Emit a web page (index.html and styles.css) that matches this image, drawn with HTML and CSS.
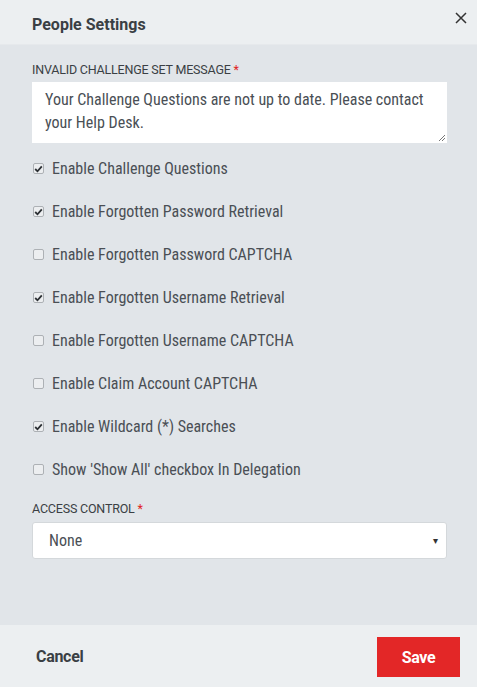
FILE: index.html
```html
<!DOCTYPE html>
<html>
<head>
<meta charset="utf-8">
<link rel="stylesheet" href="styles.css">
</head>
<body>
<div class="modal">
  <header class="head">
    <h1 class="title">People Settings</h1>
    <button class="close" aria-label="Close">
      <svg width="12" height="12" viewBox="0 0 12 12"><path d="M1 1 L11 11 M11 1 L1 11" stroke="#333" stroke-width="1.5" fill="none"/></svg>
    </button>
  </header>
  <main class="body">
    <div class="field first">
      <label class="lbl">INVALID CHALLENGE SET MESSAGE <span class="req">*</span></label>
      <div class="textarea">Your Challenge Questions are not up to date. Please contact your Help Desk.
        <svg class="grip" width="8" height="8" viewBox="0 0 8 8"><path d="M7 1 L1 7 M7 4 L4 7" stroke="#777" stroke-width="1"/></svg>
      </div>
    </div>
    <ul class="checks">
      <li class="row"><span class="cb on"><svg width="9" height="8" viewBox="0 0 9 8"><path d="M1.2 4 L3.5 6.3 L7.8 1.4" stroke="#2b2f33" stroke-width="1.8" fill="none"/></svg></span>Enable Challenge Questions</li>
      <li class="row"><span class="cb on"><svg width="9" height="8" viewBox="0 0 9 8"><path d="M1.2 4 L3.5 6.3 L7.8 1.4" stroke="#2b2f33" stroke-width="1.8" fill="none"/></svg></span>Enable Forgotten Password Retrieval</li>
      <li class="row"><span class="cb"></span>Enable Forgotten Password CAPTCHA</li>
      <li class="row"><span class="cb on"><svg width="9" height="8" viewBox="0 0 9 8"><path d="M1.2 4 L3.5 6.3 L7.8 1.4" stroke="#2b2f33" stroke-width="1.8" fill="none"/></svg></span>Enable Forgotten Username Retrieval</li>
      <li class="row"><span class="cb"></span>Enable Forgotten Username CAPTCHA</li>
      <li class="row"><span class="cb"></span>Enable Claim Account CAPTCHA</li>
      <li class="row"><span class="cb on"><svg width="9" height="8" viewBox="0 0 9 8"><path d="M1.2 4 L3.5 6.3 L7.8 1.4" stroke="#2b2f33" stroke-width="1.8" fill="none"/></svg></span>Enable Wildcard (*) Searches</li>
      <li class="row"><span class="cb"></span>Show 'Show All' checkbox In Delegation</li>
    </ul>
    <div class="field second">
      <label class="lbl">ACCESS CONTROL <span class="req">*</span></label>
      <div class="select"><span>None</span><span class="arrow">&#9662;</span></div>
    </div>
  </main>
  <footer class="foot">
    <button class="cancel">Cancel</button>
    <button class="save">Save</button>
  </footer>
</div>
</body>
</html>
```
FILE: styles.css
```css
* { box-sizing: border-box; }
html, body { margin: 0; padding: 0; }
body { font-family: "Roboto Condensed", Roboto, "Liberation Sans", sans-serif; color: #444; background: #e1e5e9; }
.modal { width: 477px; height: 687px; display: flex; flex-direction: column; background: #e1e5e9; }
.head { height: 45px; background: #eceff1; display: flex; align-items: flex-start; justify-content: space-between; padding: 0 0 0 32px; border-bottom: 1px solid #e6e9ec; }
.title { margin: 15px 0 0; font-family: Roboto, sans-serif; font-size: 16px; font-weight: 700; color: #3a3f44; letter-spacing: 0; }
.close { background: none; border: 0; padding: 0; margin: 11px 9px 0 0; width: 14px; height: 14px; display: flex; align-items: center; justify-content: center; }
.body { flex: 1; padding: 18px 30px 0 32px; }
.field { display: flex; flex-direction: column; }
.lbl { font-family: Roboto, sans-serif; font-size: 12.5px; color: #3a3f44; letter-spacing: -0.2px; line-height: 14px; margin-bottom: 5px; }
.second .lbl { margin-bottom: 6px; }
.req { color: #e02424; }
.textarea { position: relative; background: #fff; height: 61px; padding: 6px 13px; font-size: 16px; line-height: 23px; color: #4a4f55; letter-spacing: 0; }
.grip { position: absolute; right: 1px; bottom: 1px; }
.checks { list-style: none; margin: 16px 0 0; padding: 0; display: flex; flex-direction: column; gap: 24px; }
.row { display: flex; align-items: center; height: 19px; font-size: 16px; color: #4a4f55; letter-spacing: 0; }
.cb { width: 11px; height: 11px; border: 1px solid #adb1b5; border-radius: 2px; background: #eceef0; margin: 0 8px 0 1px; display: flex; align-items: center; justify-content: center; flex: none; }
.checks + .field { margin-top: 23px; }
.select { height: 37px; background: #fff; border: 1px solid #d4d8db; border-radius: 3px; display: flex; align-items: center; justify-content: space-between; padding: 0 8px 0 16px; font-size: 16px; color: #4a4f55; }
.arrow { font-size: 10px; color: #333; }
.foot { height: 62px; background: #eceff1; display: flex; align-items: center; justify-content: space-between; padding: 0 17px 0 36px; }
.cancel { background: none; border: 0; padding: 0; font-family: Roboto, sans-serif; font-size: 16px; font-weight: 700; color: #3a3f44; letter-spacing: -0.3px; }
.save { background: #e32727; border: 0; width: 83px; height: 40px; margin-top: 2px; color: #fff; font-family: Roboto, sans-serif; font-size: 16px; font-weight: 700; letter-spacing: -0.3px; }
```
